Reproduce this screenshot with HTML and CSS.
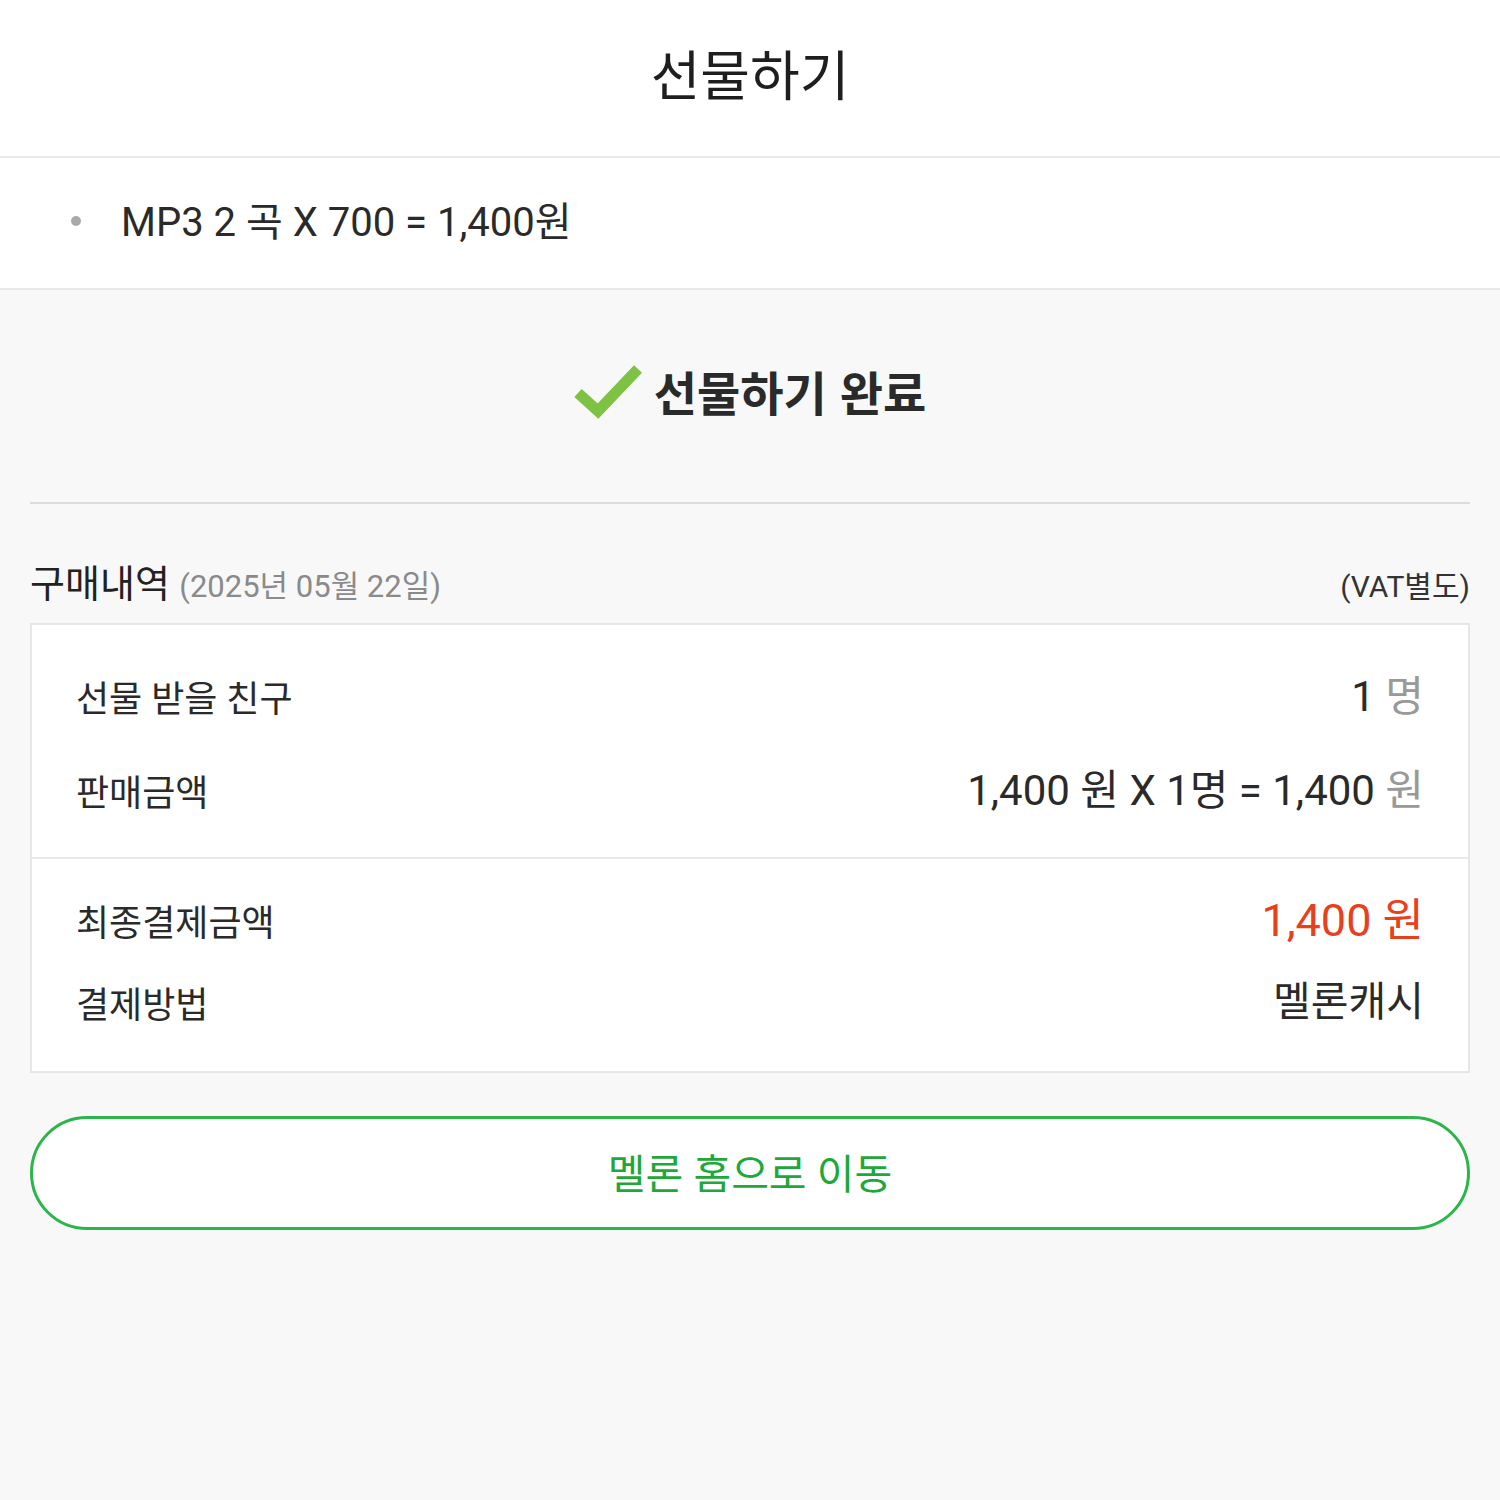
FILE: index.html
```html
<!DOCTYPE html>
<html lang="ko">
<head>
<meta charset="utf-8">
<title>선물하기</title>
<link rel="stylesheet" href="styles.css">
</head>
<body>
<header class="topbar">
  <h1 class="title">선물하기</h1>
</header>
<section class="summary">
  <ul class="summary-list">
    <li>MP3 2 곡 X 700 = 1,400원</li>
  </ul>
</section>
<main class="content">
  <div class="done">
    <svg class="check" viewBox="0 0 68 56" width="68" height="56" aria-hidden="true">
      <path d="M4 30 L24 48 L64 6" fill="none" stroke="#7dc242" stroke-width="11" stroke-linejoin="miter"/>
    </svg>
    <span class="done-text">선물하기 완료</span>
  </div>
  <hr class="divider">
  <div class="history-head">
    <div class="history-title">구매내역 <span class="date">(2025년 05월 22일)</span></div>
    <div class="vat">(VAT별도)</div>
  </div>
  <div class="box">
    <div class="box-section first">
      <div class="row">
        <span class="label">선물 받을 친구</span>
        <span class="value up">1 <span class="unit">명</span></span>
      </div>
      <div class="row">
        <span class="label">판매금액</span>
        <span class="value up">1,400 원 X 1명 = 1,400 <span class="unit">원</span></span>
      </div>
    </div>
    <div class="box-section second">
      <div class="row">
        <span class="label">최종결제금액</span>
        <span class="value total up">1,400 원</span>
      </div>
      <div class="row">
        <span class="label">결제방법</span>
        <span class="value cash up">멜론캐시</span>
      </div>
    </div>
  </div>
  <button class="home-btn" type="button">멜론 홈으로 이동</button>
</main>
</body>
</html>
```
FILE: styles.css
```css
html, body {
  margin: 0;
  padding: 0;
}
body {
  background: #f8f8f8;
  font-family: Roboto, "Noto Sans CJK KR", sans-serif;
  color: #222;
}
.topbar {
  background: #fff;
  height: 156px;
  border-bottom: 2px solid #e8e8e8;
  display: flex;
  align-items: center;
  justify-content: center;
}
.title {
  margin: 0;
  font-size: 54px;
  font-weight: 400;
  color: #1e1e1e;
  padding-bottom: 12px;
}
.summary {
  background: #fff;
  height: 130px;
  border-bottom: 2px solid #e8e8e8;
  display: flex;
  align-items: center;
}
.summary-list {
  margin: 0;
  padding: 0 0 8px 121px;
  list-style: none;
}
.summary-list li {
  position: relative;
  font-size: 40px;
  color: #2a2a2a;
}
.summary-list li::before {
  content: "";
  position: absolute;
  left: -50px;
  top: 50%;
  width: 10px;
  height: 10px;
  margin-top: -3px;
  border-radius: 50%;
  background: #aaa;
}
.content {
  padding: 0 30px;
}
.done {
  display: flex;
  align-items: center;
  justify-content: center;
  gap: 12px;
  height: 200px;
  padding-bottom: 12px;
}
.check {
  display: block;
  margin-top: 2px;
}
.done-text {
  font-size: 47px;
  font-weight: 700;
  color: #2a2a2a;
  font-family: "Noto Sans CJK KR", sans-serif;
}
.divider {
  margin: 0;
  border: 0;
  border-top: 2px solid #dcdcdc;
}
.history-head {
  display: flex;
  justify-content: space-between;
  align-items: baseline;
  padding-top: 49px;
  padding-bottom: 15px;
}
.history-title {
  font-size: 38px;
  color: #222;
}
.date {
  font-size: 31px;
  color: #8a8a8a;
}
.vat {
  font-size: 30px;
  color: #333;
}
.box {
  background: #fff;
  border: 2px solid #e6e6e6;
}
.box-section {
  padding: 0 44px;
}
.box-section.first {
  padding-top: 24px;
  padding-bottom: 20px;
  border-bottom: 2px solid #e8e8e8;
}
.box-section.second {
  padding-top: 20px;
  padding-bottom: 28px;
}
.row {
  display: flex;
  justify-content: space-between;
  align-items: center;
  height: 94px;
}
.second .row {
  height: 82px;
}
.label {
  font-size: 36px;
  color: #2a2a2a;
}
.value {
  font-size: 42px;
  color: #2a2a2a;
}
.value.up {
  position: relative;
  top: -4px;
}
.unit {
  color: #999;
}
.total {
  color: #e8401c;
  font-size: 45px;
}
.cash {
  font-size: 41px;
}
.home-btn {
  display: block;
  width: 100%;
  height: 114px;
  margin-top: 43px;
  background: #fff;
  border: 3px solid #2bb54a;
  border-radius: 57px;
  color: #1ea83a;
  font-family: Roboto, "Noto Sans CJK KR", sans-serif;
  font-size: 41px;
  padding: 0 0 4px;
}
```
